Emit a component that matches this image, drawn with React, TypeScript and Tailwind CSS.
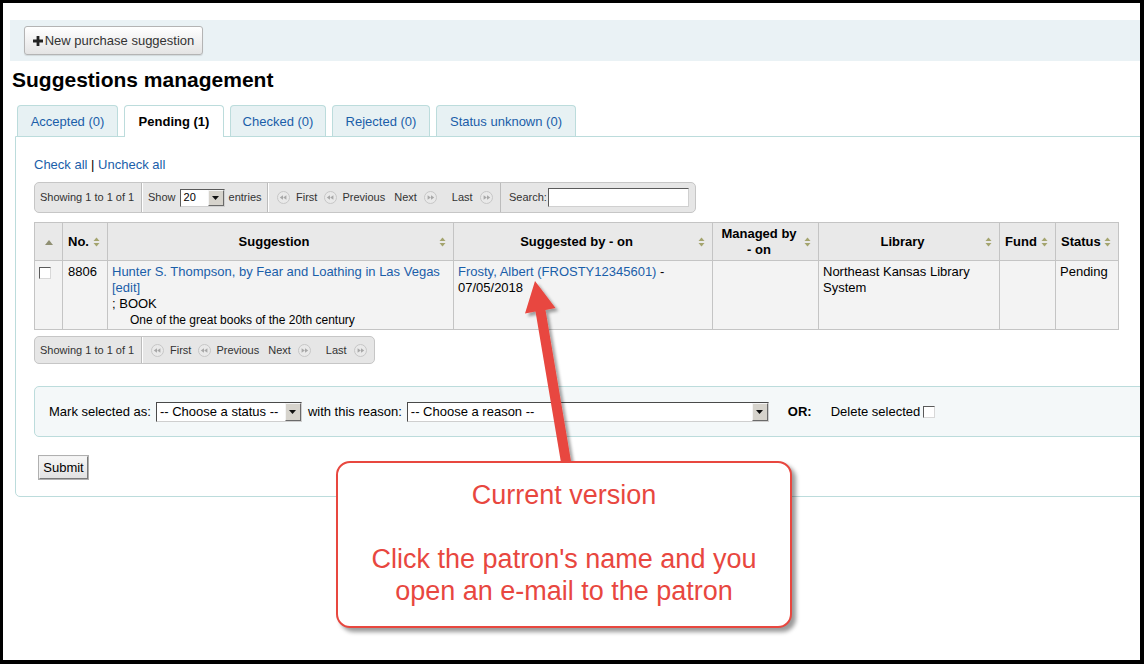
import React from 'react';

// Small olive up/down sort marker used in the table header
function SortIcon() {
  return (
    <svg width="7" height="10" viewBox="0 0 7 10" className="absolute right-[7px] top-1/2 -translate-y-1/2">
      <path d="M3.5 0.5 L6.5 4 H0.5 Z" fill="#a4a46e" />
      <path d="M3.5 9.5 L6.5 6 H0.5 Z" fill="#a4a46e" />
    </svg>
  );
}

function NavIcon({ dir }: { dir: 'left' | 'right' }) {
  return (
    <svg width="13" height="13" viewBox="0 0 13 13" className="shrink-0">
      <circle cx="6.5" cy="6.5" r="6" fill="#e9e9e9" stroke="#c6c6c6" />
      {dir === 'left' ? (
        <path d="M2.8 6.5 L6 4.3 V8.7 Z M6.2 6.5 L9.4 4.3 V8.7 Z" fill="#a8a8a8" />
      ) : (
        <path d="M10.2 6.5 L7 4.3 V8.7 Z M6.8 6.5 L3.6 4.3 V8.7 Z" fill="#a8a8a8" />
      )}
    </svg>
  );
}

function CheckBox() {
  return (
    <span className="inline-block h-[12px] w-[12px] shrink-0 border border-t-[#5a5a5a] border-l-[#5a5a5a] border-r-[#d8d8d8] border-b-[#d8d8d8] bg-white" />
  );
}

function DropButton() {
  return (
    <span className="flex h-full w-[16px] shrink-0 items-center justify-center border border-t-[#f4f4f4] border-l-[#f4f4f4] border-r-[#6a6a6a] border-b-[#6a6a6a] bg-[#d6d3cc]">
      <svg width="7" height="4" viewBox="0 0 7 4">
        <path d="M0 0 H7 L3.5 4 Z" fill="#111" />
      </svg>
    </span>
  );
}

function Pager({ search }: { search?: boolean }) {
  return (
    <div
      className={`flex items-stretch rounded-[5px] border border-[#c6c6c6] bg-[#e6e6e6] text-[11px] text-[#333] ${
        search ? 'h-[31px] w-[662px]' : 'h-[28px] w-[341px]'
      }`}
    >
      <div className="flex w-[107px] items-center border-r border-[#bcbcbc] pl-[5px]">Showing 1 to 1 of 1</div>
      {search && (
        <div className="flex w-[126px] items-center border-l border-r border-l-white border-r-[#bcbcbc] pl-[5px]">
          <span>Show</span>
          <span className="ml-[4px] flex h-[18px] w-[45px] items-center border border-t-[#5a5a5a] border-l-[#5a5a5a] border-r-[#d0d0d0] border-b-[#d0d0d0] bg-white">
            <span className="flex-1 pl-[3px] text-[11px] text-black">20</span>
            <DropButton />
          </span>
          <span className="ml-[4px]">entries</span>
        </div>
      )}
      <div className="flex w-[232px] items-center border-l border-l-white pl-[8px]">
        <NavIcon dir="left" />
        <span className="ml-[6px]">First</span>
        <span className="ml-[7px]">
          <NavIcon dir="left" />
        </span>
        <span className="ml-[5px]">Previous</span>
        <span className="ml-[9px]">Next</span>
        <span className="ml-[7px]">
          <NavIcon dir="right" />
        </span>
        <span className="ml-[15px]">Last</span>
        <span className="ml-[7px]">
          <NavIcon dir="right" />
        </span>
      </div>
      {search && (
        <div className="flex flex-1 items-center border-l border-[#bcbcbc] pl-[8px]">
          <span>Search:</span>
          <span className="ml-px h-[19px] w-[141px] border border-t-[#5a5a5a] border-l-[#5a5a5a] border-r-[#d0d0d0] border-b-[#d0d0d0] bg-white" />
        </div>
      )}
    </div>
  );
}

const tabs = [
  { label: 'Accepted (0)', w: 'w-[101px]' },
  { label: 'Pending (1)', w: 'w-[100px]', active: true },
  { label: 'Checked (0)', w: 'w-[96px]' },
  { label: 'Rejected (0)', w: 'w-[98px]' },
  { label: 'Status unknown (0)', w: 'w-[140px]' },
];

const link = 'text-[#1a5ea9]';

export default function App() {
  return (
    <div className="relative h-[664px] w-[1144px] overflow-hidden border-t-[3px] border-l-[3px] border-r-4 border-b-4 border-black bg-white font-['Liberation_Sans',Arial,sans-serif] text-[13px] text-black">
      {/* toolbar */}
      <div className="ml-[7px] mt-[17px] flex h-[41px] w-[1140px] items-start bg-[#eaf2f5] pl-[14px] pt-[6px]">
        <button className="flex h-[29px] w-[179px] items-center justify-center gap-[2px] rounded-[3px] border border-[#b4b4b4] bg-gradient-to-b from-white to-[#e4e4e4] text-[13px] text-[#333] shadow-[0_1px_1px_rgba(0,0,0,0.1)]">
          <svg width="10" height="10" viewBox="0 0 10 10">
            <path d="M3.6 0 H6.4 V3.6 H10 V6.4 H6.4 V10 H3.6 V6.4 H0 V3.6 H3.6 Z" fill="#222" />
          </svg>
          New purchase suggestion
        </button>
      </div>

      <h1 className="ml-[9px] mt-[7px] text-[21px] font-bold leading-[24px]">Suggestions management</h1>

      {/* tabs */}
      <div className="ml-[14px] mt-[13px] flex h-[31px] items-start gap-[6px]">
        {tabs.map((t) => (
          <div
            key={t.label}
            className={`flex items-center justify-center rounded-t-[4px] border border-b-0 border-[#bcdcdc] pt-px ${t.w} ${
              t.active ? 'relative z-10 h-[32px] bg-white font-bold text-black' : `h-[31px] bg-[#e7f1f3] ${link}`
            }`}
          >
            {t.label}
          </div>
        ))}
      </div>

      {/* tab panel */}
      <div className="ml-[12px] w-[1140px] rounded-bl-[5px] border border-[#bcdcdc] pb-[17px] pl-[18px] pt-[20px]">
        <div className="leading-[16px]">
          <span className={link}>Check all</span> | <span className={link}>Uncheck all</span>
        </div>

        <div className="mt-[9px]">
          <Pager search />
        </div>

        <table className="mt-[9px] w-[1084px] table-fixed border-collapse">
          <colgroup>
            <col className="w-[28px]" />
            <col className="w-[45px]" />
            <col className="w-[346px]" />
            <col className="w-[259px]" />
            <col className="w-[106px]" />
            <col className="w-[181px]" />
            <col className="w-[56px]" />
            <col className="w-[63px]" />
          </colgroup>
          <thead>
            <tr className="h-[38px] bg-[#e9e9e9] leading-[16px]">
              <th className="border border-[#c4c4c4] text-center">
                <svg width="8" height="5" viewBox="0 0 8 5" className="inline-block">
                  <path d="M4 0 L8 5 H0 Z" fill="#8f8f72" />
                </svg>
              </th>
              <th className="relative border border-[#c4c4c4] pl-[5px] pr-[18px] text-center font-bold">
                No.
                <SortIcon />
              </th>
              <th className="relative border border-[#c4c4c4] pl-[5px] pr-[18px] text-center font-bold">
                Suggestion
                <SortIcon />
              </th>
              <th className="relative border border-[#c4c4c4] pl-[5px] pr-[18px] text-center font-bold">
                Suggested by - on
                <SortIcon />
              </th>
              <th className="relative border border-[#c4c4c4] pl-[5px] pr-[18px] text-center font-bold">
                Managed by - on
                <SortIcon />
              </th>
              <th className="relative border border-[#c4c4c4] pl-[5px] pr-[18px] text-center font-bold">
                Library
                <SortIcon />
              </th>
              <th className="relative border border-[#c4c4c4] pl-[5px] pr-[18px] text-center font-bold">
                Fund
                <SortIcon />
              </th>
              <th className="relative border border-[#c4c4c4] pl-[5px] pr-[18px] text-center font-bold">
                Status
                <SortIcon />
              </th>
            </tr>
          </thead>
          <tbody>
            <tr className="h-[69px] bg-[#f3f3f3] align-top leading-[16px]">
              <td className="border border-[#c4c4c4] pl-[4px] pt-[6px]">
                <CheckBox />
              </td>
              <td className="border border-[#c4c4c4] px-[5px] pt-[3px]">8806</td>
              <td className="border border-[#c4c4c4] px-[4px] pt-[3px]">
                <div className={link}>Hunter S. Thompson, by Fear and Loathing in Las Vegas</div>
                <div className={link}>[edit]</div>
                <div>; BOOK</div>
                <div className="pl-[18px] text-[12px]">One of the great books of the 20th century</div>
              </td>
              <td className="border border-[#c4c4c4] px-[4px] pt-[3px]">
                <span className={link}>Frosty, Albert (FROSTY12345601)</span> - 07/05/2018
              </td>
              <td className="border border-[#c4c4c4] px-[4px] pt-[3px]" />
              <td className="border border-[#c4c4c4] px-[4px] pt-[3px]">Northeast Kansas Library System</td>
              <td className="border border-[#c4c4c4] px-[4px] pt-[3px]" />
              <td className="border border-[#c4c4c4] px-[4px] pt-[3px]">Pending</td>
            </tr>
          </tbody>
        </table>

        <div className="mt-[6px]">
          <Pager />
        </div>

        {/* bulk action fieldset */}
        <div className="mt-[22px] flex h-[51px] w-[1130px] items-center rounded-[5px] border border-[#bcdcdc] bg-[#f4f8f9] pl-[14px]">
          <span>Mark selected as:</span>
          <span className="ml-[5px] flex h-[20px] w-[146px] items-center border border-t-[#4a4a4a] border-l-[#4a4a4a] border-r-[#cfcfcf] border-b-[#cfcfcf] bg-white">
            <span className="flex-1 pl-[3px]">-- Choose a status --</span>
            <DropButton />
          </span>
          <span className="ml-[6px]">with this reason:</span>
          <span className="ml-[5px] flex h-[20px] w-[362px] items-center border border-t-[#4a4a4a] border-l-[#4a4a4a] border-r-[#cfcfcf] border-b-[#cfcfcf] bg-white">
            <span className="flex-1 pl-[3px]">-- Choose a reason --</span>
            <DropButton />
          </span>
          <span className="ml-[19px] font-bold">OR:</span>
          <span className="ml-[19px]">Delete selected</span>
          <span className="ml-[3px] flex">
            <CheckBox />
          </span>
        </div>

        <button className="ml-[5px] mt-[19px] flex h-[23px] w-[49px] items-center justify-center border border-t-[#f2f2f2] border-l-[#f2f2f2] border-r-[#7a7a7a] border-b-[#7a7a7a] bg-gradient-to-b from-[#f6f6f6] to-[#e2e2e2] text-[13px] outline outline-1 outline-[#b0b0b0]">
          Submit
        </button>
      </div>

      {/* annotation arrow */}
      <svg width="1144" height="664" viewBox="0 0 1144 664" className="pointer-events-none absolute left-[-3px] top-[-3px]">
        <defs>
          <filter id="arrowShadow" x="-50%" y="-10%" width="200%" height="130%">
            <feDropShadow dx="3" dy="3" stdDeviation="1.5" floodColor="#000" floodOpacity="0.35" />
          </filter>
        </defs>
        <path
          d="M535 281 L555.5 308 L545.5 310 L572.5 470 L562.5 471.5 L535.5 311.5 L525 313.5 Z"
          fill="#e8473f"
          filter="url(#arrowShadow)"
        />
      </svg>

      {/* callout */}
      <div className="absolute left-[333px] top-[458px] flex h-[167px] w-[456px] flex-col items-center rounded-[14px] border-2 border-[#e8473f] bg-white pt-[16px] text-center text-[27px] leading-[32px] text-[#e8473f] shadow-[4px_4px_4px_rgba(0,0,0,0.4)]">
        <div>Current version</div>
        <div className="h-[32px]" />
        <div>Click the patron's name and you</div>
        <div>open an e-mail to the patron</div>
      </div>
    </div>
  );
}
